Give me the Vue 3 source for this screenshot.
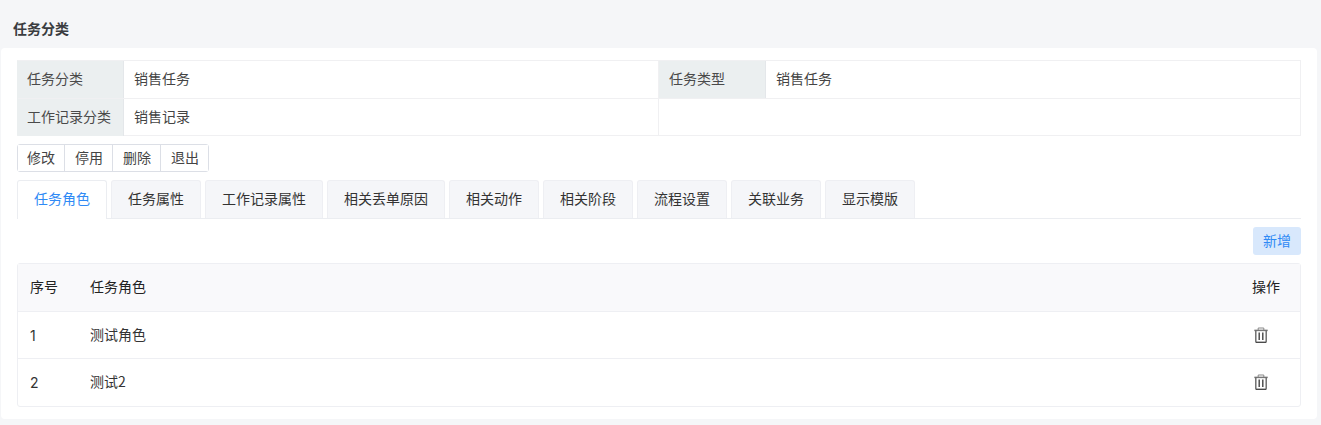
<script setup>
const tabs = ['任务角色', '任务属性', '工作记录属性', '相关丢单原因', '相关动作', '相关阶段', '流程设置', '关联业务', '显示模版']
const actions = ['修改', '停用', '删除', '退出']
const rows = [
  { id: 1, name: '测试角色' },
  { id: 2, name: '测试2' },
]
</script>

<template>
  <div class="page">
    <div class="title">任务分类</div>
    <div class="card">
      <div class="info">
        <div class="info-row">
          <div class="half">
            <div class="label">任务分类</div>
            <div class="value">销售任务</div>
          </div>
          <div class="half second">
            <div class="label">任务类型</div>
            <div class="value">销售任务</div>
          </div>
        </div>
        <div class="info-row last">
          <div class="half">
            <div class="label">工作记录分类</div>
            <div class="value">销售记录</div>
          </div>
          <div class="half second"></div>
        </div>
      </div>

      <div class="actions">
        <button v-for="a in actions" :key="a" class="action" type="button">{{ a }}</button>
      </div>

      <div class="tabs">
        <div v-for="(t, i) in tabs" :key="t" class="tab" :class="{ active: i === 0 }">{{ t }}</div>
      </div>

      <div class="toolbar">
        <button class="add" type="button">新增</button>
      </div>

      <div class="table">
        <div class="tr head">
          <div class="c-no">序号</div>
          <div class="c-name">任务角色</div>
          <div class="c-op">操作</div>
        </div>
        <div v-for="r in rows" :key="r.id" class="tr body">
          <div class="c-no num">{{ r.id }}</div>
          <div class="c-name">{{ r.name }}</div>
          <div class="c-op">
            <svg class="trash" width="16" height="16" viewBox="0 0 16 16" fill="none" stroke="#666" stroke-width="1.4">
              <path d="M1.3 3.4h13.4" stroke="#777" stroke-width="1.5" />
              <path d="M5.2 3V1h5.6V3" stroke="#888" stroke-width="1" />
              <path d="M2.8 3.5v10.9c0 .6.4 1 1 1h8.4c.6 0 1-.4 1-1V3.5" />
              <path d="M3 15.3h10" stroke="#444" stroke-width="1" />
              <path d="M6.2 5.5v7.5M9.8 5.5v7.5" stroke="#444" />
            </svg>
          </div>
        </div>
      </div>
    </div>
  </div>
</template>

<style>
html, body { margin: 0; background: #f5f6f8; }
</style>

<style scoped>
.page {
  width: 1321px;
  height: 425px;
  box-sizing: border-box;
  padding: 0 4px 6px 1px;
  background: #f5f6f8;
  font-family: "Noto Sans CJK SC", "Noto Sans", sans-serif;
  font-size: 14px;
  color: #333;
  overflow: hidden;
}
.title {
  height: 48px;
  box-sizing: border-box;
  padding: 18px 0 0 12px;
  line-height: 20px;
  font-weight: 700;
  font-size: 14px;
  color: #3a3c40;
}
.card {
  height: 371px;
  box-sizing: border-box;
  padding: 12px 16px 0;
  background: #fff;
  border-radius: 4px;
}
.info {
  height: 76px;
  box-sizing: border-box;
  border: 1px solid #f0f0f2;
  border-left-color: #ebeff0;
}
.info-row {
  display: flex;
  height: 38px;
  box-sizing: border-box;
  border-bottom: 1px solid #f0f0f2;
}
.info-row.last { height: 37px; border-bottom: 0; }
.half { display: flex; flex: 0 0 641px; }
.half.second { flex: 1; border-left: 1px solid #f0f0f2; margin-left: -1px; }
.label {
  flex: 0 0 106px;
  box-sizing: border-box;
  padding-left: 9px;
  background: #ebeff0;
  border-right: 1px solid #e4e7ea;
  line-height: 35px;
  color: #4a4a4a;
}
.second .label { flex-basis: 107px; padding-left: 10px; }
.value {
  padding-left: 10px;
  line-height: 35px;
  color: #444;
}
.actions {
  display: flex;
  width: 192px;
  height: 28px;
  box-sizing: border-box;
  margin-top: 8px;
  border: 1px solid #dcdfe6;
  border-radius: 3px;
}
.action {
  flex: 1;
  padding: 0 0 2px 1px;
  border: 0;
  border-left: 1px solid #dcdfe6;
  background: #fff;
  font: inherit;
  color: #444;
}
.action:first-child { border-left: 0; flex: 0 0 46px; padding-left: 0; }
.tabs {
  display: flex;
  gap: 4px;
  height: 39px;
  box-sizing: border-box;
  margin-top: 8px;
  border-bottom: 1px solid #ebedf1;
}
.tab {
  height: 38px;
  box-sizing: border-box;
  padding: 0 16px;
  background: #f5f6f9;
  border: 1px solid #eeeff3;
  border-bottom: 0;
  border-radius: 3px 3px 0 0;
  line-height: 35px;
  color: #333;
}
.tab.active {
  height: 39px;
  background: #fff;
  border-color: #ebedf1;
  color: #2f8af5;
}
.toolbar {
  display: flex;
  justify-content: flex-end;
  margin-top: 8px;
}
.add {
  width: 48px;
  height: 28px;
  padding: 0 0 3px;
  border: 0;
  border-radius: 3px;
  background: #d8e8fc;
  font: inherit;
  color: #2f8af5;
}
.table {
  height: 144px;
  box-sizing: border-box;
  margin-top: 8px;
  border: 1px solid #eeeff3;
  border-radius: 3px;
}
.tr {
  display: flex;
  align-items: center;
  border-bottom: 1px solid #eeeff3;
  color: #333;
}
.tr:last-child { border-bottom: 0; padding-bottom: 1px; }
.head { height: 48px; box-sizing: border-box; background: #f9f9fb; color: #222; padding-bottom: 4px; }
.body { height: 47px; box-sizing: border-box; }
.body .c-name { padding-bottom: 2px; }
.c-no { flex: 0 0 72px; padding-left: 12px; box-sizing: border-box; }
.num { font-family: Inter, "Noto Sans", sans-serif; font-size: 14px; }
.c-name { flex: 1; }
.c-op { flex: 0 0 48px; }
.trash { display: block; margin-left: 1px; }
</style>
